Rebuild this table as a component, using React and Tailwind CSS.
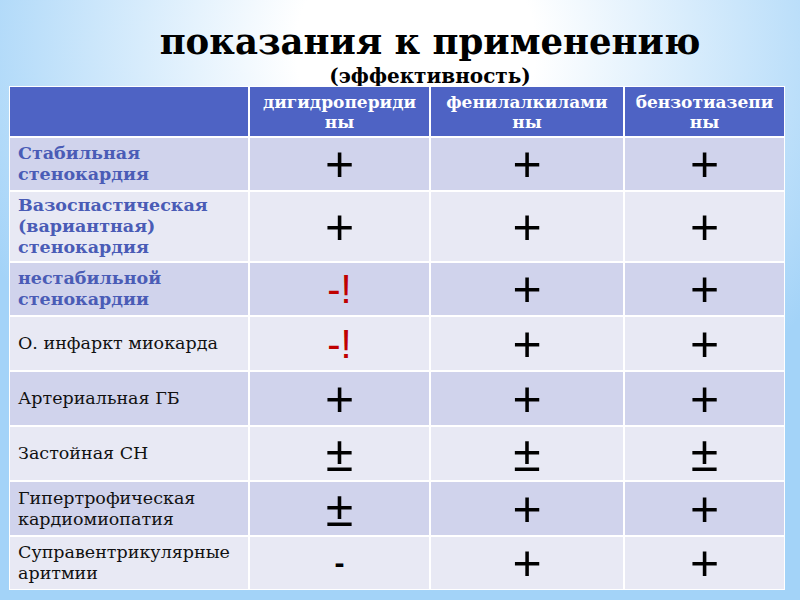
import React from "react";

const rows = [
  { label: ["Стабильная", "стенокардия"], bold: true, h: "h-[52px]", vals: ["+", "+", "+"] },
  { label: ["Вазоспастическая", "(вариантная)", "стенокардия"], bold: true, h: "h-[69px]", vals: ["+", "+", "+"] },
  { label: ["нестабильной", "стенокардии"], bold: true, h: "h-[52px]", vals: ["-!", "+", "+"] },
  { label: ["О. инфаркт миокарда"], h: "h-[53px]", vals: ["-!", "+", "+"] },
  { label: ["Артериальная ГБ"], h: "h-[53px]", vals: ["+", "+", "+"] },
  { label: ["Застойная СН"], h: "h-[53px]", vals: ["±", "±", "±"] },
  { label: ["Гипертрофическая", "кардиомиопатия"], h: "h-[53px]", vals: ["±", "+", "+"] },
  { label: ["Суправентрикулярные", "аритмии"], h: "h-[52px]", vals: ["-", "+", "+"] },
];

function Mark({ v }) {
  if (v === "-!") {
    return <span className="[font-family:'Liberation_Sans',sans-serif] text-[40px] leading-none text-[#c00000]">-!</span>;
  }
  if (v === "-") {
    return <span className="[font-family:'Liberation_Sans',sans-serif] font-bold text-[30px] leading-none text-black">-</span>;
  }
  return <span className="[font-family:'Liberation_Sans',sans-serif] text-[50px] leading-none text-black">{v}</span>;
}

export default function App() {
  return (
    <div className="w-[800px] h-[600px] overflow-hidden bg-[radial-gradient(ellipse_60%_75%_at_52%_8%,#ffffff_0%,#ffffff_25%,#a3d3f8_100%)] [font-family:'DejaVu_Serif',serif]">
      <div className="h-[86px] pl-[60px] flex flex-col items-center pt-[22px]">
        <div className="text-[35.5px] font-bold leading-[40px] text-black">показания к применению</div>
        <div className="text-[20px] font-bold leading-[22px] text-black mt-[3px]">(эффективность)</div>
      </div>
      <div className="relative z-10 ml-[9px] w-[776px] bg-white p-[1px] grid grid-cols-[238px_179px_192px_159px] gap-[2px]">
        <div className="h-[49px] bg-[#4e63c4]" />
        {["дигидропериди|ны", "фенилалкилами|ны", "бензотиазепи|ны"].map((t) => (
          <div key={t} className="h-[49px] bg-[#4e63c4] flex flex-col items-center justify-center text-white font-bold text-[17px] leading-[20px]">
            {t.split("|").map((s) => <span key={s}>{s}</span>)}
          </div>
        ))}
        {rows.map((r, i) => {
          const bg = i % 2 === 0 ? "bg-[#d0d3ec]" : "bg-[#e8e9f4]";
          return (
            <React.Fragment key={i}>
              <div className={`${r.h} ${bg} flex flex-col justify-center pl-[8px] text-[17.5px] leading-[21px] ${r.bold ? "font-bold text-[#4a5cb6]" : "text-[#111]"}`}>
                {r.label.map((l) => <span key={l}>{l}</span>)}
              </div>
              {r.vals.map((v, j) => (
                <div key={j} className={`${r.h} ${bg} flex items-center justify-center`}>
                  <Mark v={v} />
                </div>
              ))}
            </React.Fragment>
          );
        })}
      </div>
    </div>
  );
}
